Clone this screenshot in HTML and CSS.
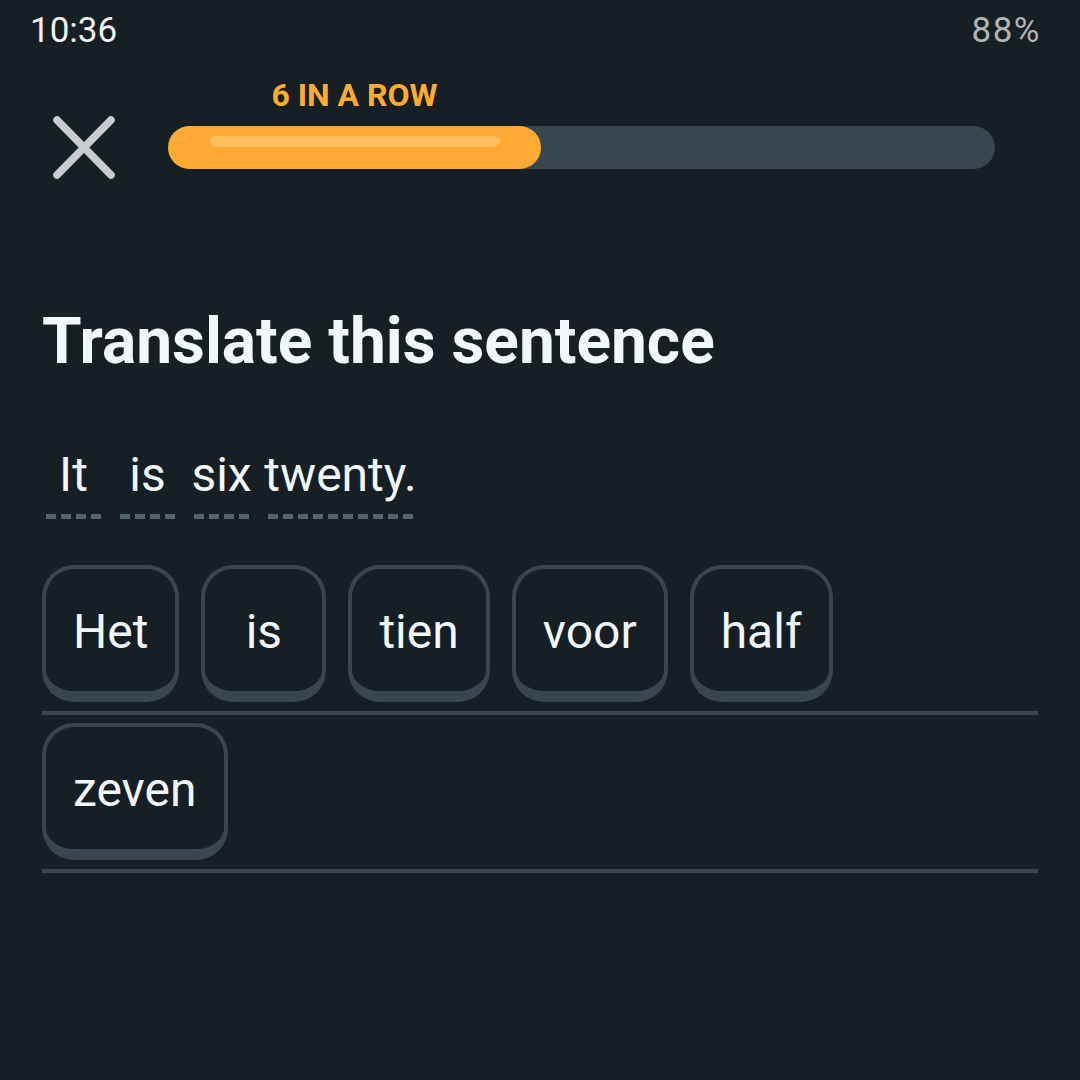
FILE: index.html
```html
<!DOCTYPE html>
<html lang="en">
<head>
  <meta charset="UTF-8">
  <title>Translate this sentence</title>
  <meta name="viewport" content="width=device-width, initial-scale=1.0">
  <link rel="stylesheet" href="styles.css">
</head>
<body>

  <div class="status-bar">
    <span class="clock">10:36</span>
    <span class="battery">88%</span>
  </div>

  <div class="lesson-top">
    <div class="streak-row">
      <div class="streak-label" style="width: 45.1%">6 IN A ROW</div>
    </div>
    <div class="bar-row">
      <svg class="close-icon" width="64" height="64" viewBox="0 0 64 64">
        <line x1="5" y1="5" x2="59" y2="60" />
        <line x1="59" y1="5" x2="5" y2="60" />
      </svg>
      <div class="progress">
        <div class="progress-fill" style="width: 45.1%">
          <div class="progress-shine"></div>
        </div>
      </div>
    </div>
  </div>

  <div class="content">
    <h1>Translate this sentence</h1>

    <div class="sentence">
      <span class="word dash-4"><span class="word-text">It</span><span class="dashes"></span></span>
      <span class="word dash-4"><span class="word-text">is</span><span class="dashes"></span></span>
      <span class="word dash-4"><span class="word-text">six</span><span class="dashes"></span></span>
      <span class="word dash-10"><span class="word-text">twenty.</span><span class="dashes"></span></span>
    </div>

    <div class="answer">
      <div class="answer-row">
        <button class="tile">Het</button>
        <button class="tile">is</button>
        <button class="tile">tien</button>
        <button class="tile">voor</button>
        <button class="tile">half</button>
      </div>
      <div class="answer-row">
        <button class="tile">zeven</button>
      </div>
    </div>
  </div>

</body>
</html>
```

FILE: styles.css
```css
* {
  box-sizing: border-box;
}

body {
  margin: 0;
  width: 1080px;
  height: 1080px;
  background-color: #161f24;
  color: #f1f7fb;
  font-family: Roboto, "Liberation Sans", sans-serif;
  overflow: hidden;
}

.status-bar {
  display: flex;
  justify-content: space-between;
  height: 48px;
  padding: 13px 39px 0 30px;
  font-size: 35px;
  line-height: 35px;
}

.clock {
  color: #f2f2f2;
}

.battery {
  color: #b2b4b5;
  letter-spacing: 1.5px;
}

.lesson-top {
  padding: 31px 85px 0 52px;
}

.streak-row {
  margin-left: 116px;
  height: 32px;
  margin-bottom: 4px;
}

.streak-label {
  text-align: center;
  color: #ffab33;
  font-weight: bold;
  font-size: 32px;
  line-height: 32px;
  white-space: nowrap;
}

.bar-row {
  display: flex;
  align-items: center;
  gap: 52px;
}

.close-icon line {
  stroke: #c9cbcc;
  stroke-width: 7.5;
  stroke-linecap: round;
}

.progress {
  flex: 1;
  height: 43px;
  border-radius: 22px;
  background-color: #37464f;
}

.progress-fill {
  height: 100%;
  border-radius: 22px;
  background-color: #ffab33;
  padding: 10px 41px 0 42px;
}

.progress-shine {
  height: 11px;
  border-radius: 6px;
  background-color: #ffbf5e;
}

.content {
  padding: 0 42px;
}

h1 {
  margin: 131px 0 0 0;
  font-size: 64px;
  line-height: 64px;
  font-weight: bold;
}

.sentence {
  display: flex;
  gap: 19px;
  margin: 77px 0 0 4px;
}

.word {
  display: flex;
  flex-direction: column;
  align-items: center;
}

.word-text {
  font-size: 48px;
  line-height: 48px;
  white-space: nowrap;
}

.dashes {
  width: 100%;
  height: 5px;
  margin-top: 15px;
  background: repeating-linear-gradient(to right, #52656d 0 10px, transparent 10px 15px);
}

.dash-4 {
  width: 55px;
}

.dash-10 {
  width: 145px;
}

.answer {
  margin-top: 46px;
}

.answer-row {
  display: flex;
  gap: 22px;
  padding-bottom: 9px;
  margin-bottom: 8px;
  border-bottom: 4px solid #37464f;
}

.tile {
  height: 137px;
  min-width: 125px;
  padding: 4px 27px 0;
  background-color: #161f24;
  color: #f1f7fb;
  border: 4px solid #37464f;
  border-bottom-width: 11px;
  border-radius: 32px;
  font-family: inherit;
  font-size: 48px;
  line-height: 48px;
  cursor: pointer;
}
```
